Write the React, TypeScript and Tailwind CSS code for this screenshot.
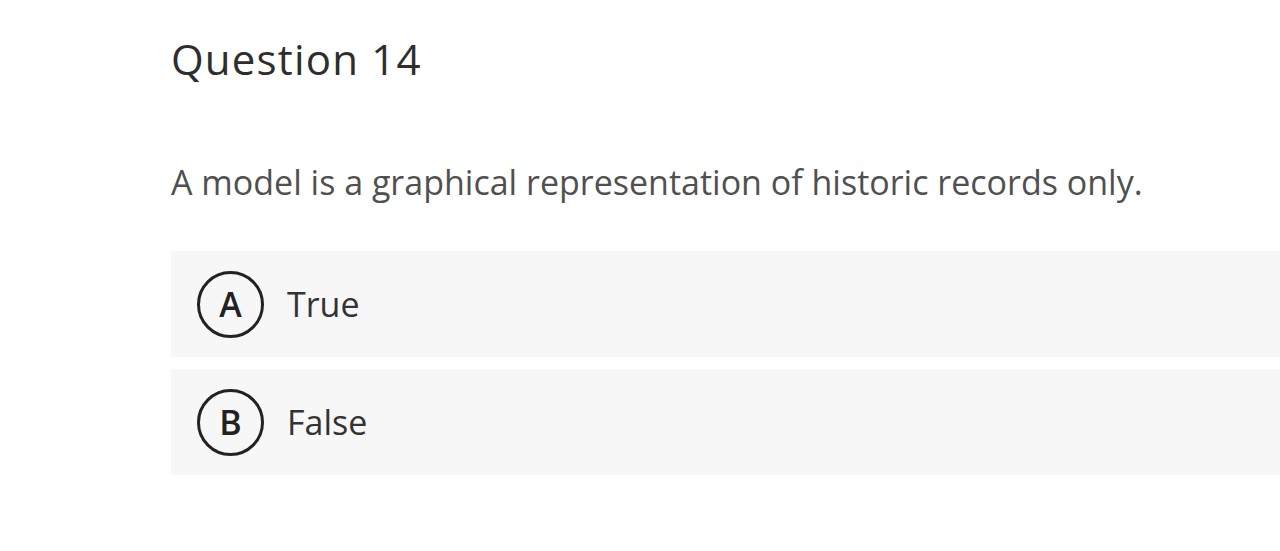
import React from "react";

const options = [
  { letter: "A", label: "True" },
  { letter: "B", label: "False" },
];

const App: React.FC = () => {
  return (
    <div
      className="min-h-[551px] w-[1280px] overflow-hidden bg-white pl-[171px] pt-[31px]"
      style={{ fontFamily: "'Open Sans', sans-serif" }}
    >
      <h2 className="text-[42px] font-medium leading-[56px] tracking-[1.2px] text-[#2e2e2e]">Question 14</h2>

      <p className="mt-[73px] text-[34px] leading-[44px] text-[#505050]">
        A model is a graphical representation of historic records only.
      </p>

      <div className="mt-[47px] flex flex-col gap-[12px]">
        {options.map((o) => (
          <div key={o.letter} className="flex h-[106px] w-[1200px] items-center bg-[#f7f7f7] pl-[26px]">
            <span className="flex h-[67px] w-[67px] items-center justify-center rounded-full border-[3px] border-[#222222] text-[34px] font-semibold text-[#222222]">
              {o.letter}
            </span>
            <span className="ml-[23px] text-[34px] text-[#333333]">{o.label}</span>
          </div>
        ))}
      </div>
    </div>
  );
};

export default App;
